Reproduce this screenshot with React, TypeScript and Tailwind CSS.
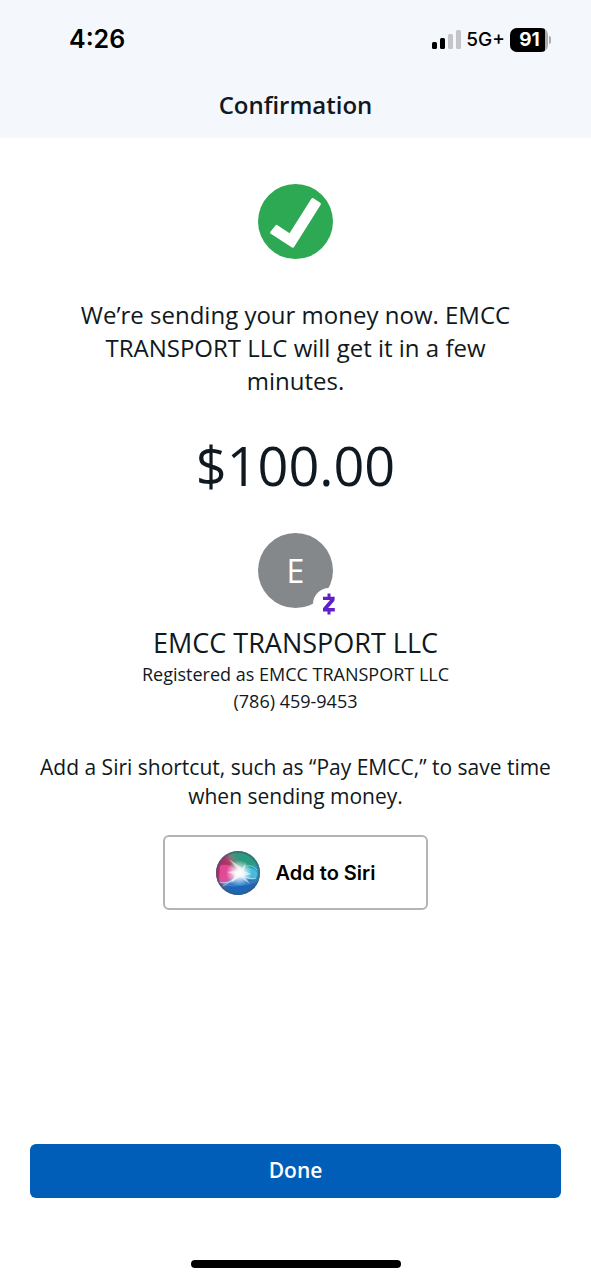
function SignalIcon() {
  return (
    <svg width="29" height="20" viewBox="0 0 29 20" aria-hidden="true">
      <rect x="0" y="12" width="5" height="7" rx="1.5" fill="#000" />
      <rect x="8" y="8" width="5" height="11" rx="1.5" fill="#000" />
      <rect x="16" y="4" width="5" height="15" rx="1.5" fill="#c3c5c9" />
      <rect x="24" y="0" width="5" height="19" rx="1.5" fill="#c3c5c9" />
    </svg>
  );
}

function Battery({ level }: { level: number }) {
  return (
    <span className="flex items-center gap-px">
      <span className="flex h-6 w-[38px] overflow-hidden rounded-[7px] bg-[#a9abae]">
        <span className="flex h-6 w-[35px] items-center justify-center bg-black pl-1 text-[19px] font-bold text-white">
          {level}
        </span>
      </span>
      <span className="h-2 w-0.5 rounded-r-full bg-[#a9abae]" />
    </span>
  );
}

function CheckIcon() {
  return (
    <svg width="75" height="75" viewBox="0 0 75 75" aria-hidden="true">
      <circle cx="37.5" cy="37.5" r="37.5" fill="#2da853" />
      <path
        d="M18.6 42.4 32 51.2 54.6 15.6 61.4 20 34.8 62.2 13.6 48.6Z"
        fill="#fff"
        stroke="#fff"
        strokeWidth="3"
        strokeLinejoin="round"
      />
    </svg>
  );
}

function ZelleIcon() {
  return (
    <svg width="14" height="22" viewBox="0 0 14 22" fill="none" stroke="#5f20c9" aria-hidden="true">
      <path d="M1 5.4H12.6M1 16.8H12.8" strokeWidth="3.4" />
      <path d="M11.2 6.2 2.8 16" strokeWidth="3.8" />
      <path d="M7 0.5V4M7 18V21.5" strokeWidth="3" />
    </svg>
  );
}

function SiriIcon() {
  return (
    <svg width="44" height="44" viewBox="0 0 44 44" aria-hidden="true">
      <defs>
        <clipPath id="orb">
          <circle cx="22" cy="22" r="22" />
        </clipPath>
        <filter id="soft" x="-50%" y="-50%" width="200%" height="200%">
          <feGaussianBlur stdDeviation="3" />
        </filter>
        <filter id="fine" x="-50%" y="-50%" width="200%" height="200%">
          <feGaussianBlur stdDeviation="0.5" />
        </filter>
        <radialGradient id="glow">
          <stop offset="0" stopColor="#fff" />
          <stop offset="0.3" stopColor="#fff" stopOpacity="0.85" />
          <stop offset="1" stopColor="#fff" stopOpacity="0" />
        </radialGradient>
      </defs>
      <g clipPath="url(#orb)">
        <rect width="44" height="44" fill="#47607f" />
        <g filter="url(#soft)">
          <path d="M22 22 10-4H50V18Z" fill="#2a9a80" />
          <path d="M22 22 48 12V36Z" fill="#35a0c4" />
          <path d="M22 22 46 32 34 50H6L4 34Z" fill="#1d66b4" />
          <path d="M22 22 2 36-4 22 4 4 12 2Z" fill="#b92c68" />
        </g>
        <path d="M4 15C12 11 18 17 23 23 17 34 8 35 3 30Z" fill="#f055a4" opacity="0.75" filter="url(#fine)" />
        <path d="M22 23C28 15 38 15 41 22 42 29 34 31 22 23Z" fill="#59cdf4" opacity="0.6" filter="url(#fine)" />
        <path d="M6 34C13 29 18 26 23 23 27 29 34 31 40 31 34 35 14 37 6 34Z" fill="#3f9be6" opacity="0.5" filter="url(#fine)" />
        <g fill="none" filter="url(#fine)">
          <path d="M3 31C11 34 18 29 23 23 30 27 35 29 40 27" stroke="#b4e0f8" strokeWidth="1.2" opacity="0.8" />
          <path d="M5 13C14 10 19 16 24 23 30 32 35 33 39 32" stroke="#7c4a66" strokeWidth="1" opacity="0.6" />
          <path d="M7 35C14 31 19 28 23 23 28 14 35 12 41 19" stroke="#8fe6d5" strokeWidth="1" opacity="0.7" />
          <circle cx="22" cy="22" r="21" stroke="#395a70" strokeWidth="2" opacity="0.55" />
        </g>
        <circle cx="23" cy="22" r="13" fill="url(#glow)" />
        <path
          d="M23 20 13 8 26 17 30 12 28 20 35 23 28 25 34 33 24 26 15 32 19 24 11 21 19 20Z"
          fill="#fff"
          opacity="0.55"
          filter="url(#fine)"
        />
      </g>
    </svg>
  );
}

export default function App() {
  return (
    <div className="flex min-h-screen flex-col bg-white font-['Open_Sans',sans-serif] text-[#101820]">
      <header className="bg-[#f4f7fb] pb-2">
        <div className="flex h-20 items-center justify-between pr-10 pl-[69px] font-['Inter',sans-serif] text-black">
          <span className="text-[25px] font-semibold">4:26</span>
          <span className="flex items-center gap-[5px]">
            <SignalIcon />
            <span className="text-[19px] font-medium">5G+</span>
            <Battery level={91} />
          </span>
        </div>
        <h1 className="text-center text-2xl leading-[50px] font-semibold">Confirmation</h1>
      </header>

      <main className="flex flex-1 flex-col items-center px-[30px] pt-[46px] text-center">
        <CheckIcon />
        <p className="mt-[39px] max-w-[460px] text-2xl leading-[33px]">
          We’re sending your money now. EMCC TRANSPORT LLC will get it in a few minutes.
        </p>
        <p className="mt-9 text-[54px] leading-[64px]">$100.00</p>

        <div className="relative mt-9 flex size-[75px] items-center justify-center rounded-full bg-[#85888b] text-[32px] text-white">
          E
          <span className="absolute -right-3 -bottom-3 flex size-8 items-center justify-center rounded-full bg-white">
            <ZelleIcon />
          </span>
        </div>
        <h2 className="mt-[17px] text-[27px] leading-9">EMCC TRANSPORT LLC</h2>
        <p className="text-lg leading-[27px]">Registered as EMCC TRANSPORT LLC</p>
        <p className="text-lg leading-[27px]">(786) 459-9453</p>

        <p className="mt-[38px] text-[21px] leading-[29px]">
          Add a Siri shortcut, such as “Pay EMCC,” to save time when sending money.
        </p>
        <button
          type="button"
          className="mt-6 flex h-[75px] w-[265px] items-center justify-center gap-4 rounded-md border-2 border-[#b4b4b6] bg-white font-['Inter',sans-serif] text-xl font-semibold text-black"
        >
          <SiriIcon />
          Add to Siri
        </button>
      </main>

      <footer className="flex flex-col items-center px-[30px] pb-3">
        <button
          type="button"
          className="h-[54px] w-full rounded-md bg-[#005eb8] text-[21px] font-semibold text-white"
        >
          Done
        </button>
        <div className="mt-[62px] h-2 w-[210px] rounded-full bg-black" />
      </footer>
    </div>
  );
}
